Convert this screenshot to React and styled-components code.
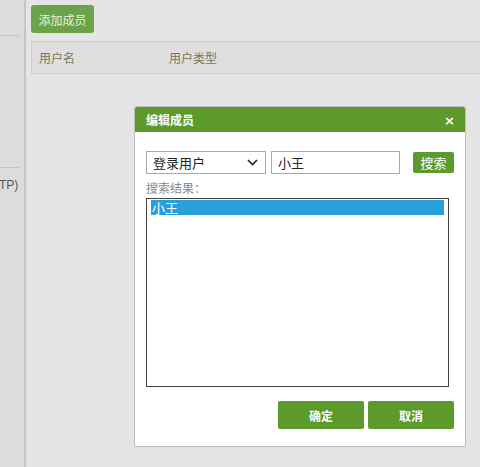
import React from "react";
import styled, { createGlobalStyle } from "styled-components";

const GlobalStyle = createGlobalStyle`
  html, body {
    margin: 0;
    padding: 0;
    background: #e5e5e5;
    font-family: "Noto Sans CJK SC", "Liberation Sans", sans-serif;
  }
`;

const Page = styled.div`
  position: relative;
  display: flex;
  width: 480px;
  height: 467px;
  overflow: hidden;
  background: #e5e5e5;
`;

const Sidebar = styled.div`
  width: 24px;
  flex-shrink: 0;
  background: #dcdcdc;
  border-right: 2px solid #c6c6c6;
  display: flex;
  flex-direction: column;
`;

const SideLine = styled.div`
  width: 19px;
  height: 1px;
  background: #c4c4c4;
  margin-top: ${(p) => p.top}px;
`;

const SideText = styled.div`
  font-family: "Liberation Sans", sans-serif;
  font-size: 12px;
  color: #555;
  margin-top: 10px;
  margin-left: -1px;
  line-height: 14px;
`;

const Main = styled.div`
  flex: 1;
  padding: 5px 0 0 5px;
  display: flex;
  flex-direction: column;
  gap: 8px;
`;

const AddButton = styled.button`
  width: 63px;
  height: 28px;
  padding: 0;
  border: none;
  border-radius: 3px;
  background: #6ba34a;
  color: #e6efdf;
  font-family: inherit;
  font-size: 12px;
`;

const TableHead = styled.div`
  height: 31px;
  display: flex;
  align-items: center;
  background: #dedede;
  border: 1px solid #cfcfcf;
  border-right: none;
  font-size: 12px;
  color: #76765c;
`;

const HeadCell = styled.div`
  width: ${(p) => p.w}px;
  padding-left: 7px;
`;

const Dialog = styled.div`
  position: absolute;
  left: 134px;
  top: 106px;
  width: 330px;
  height: 339px;
  background: #fff;
  border: 1px solid #bdbdbd;
  border-radius: 3px 3px 0 0;
  display: flex;
  flex-direction: column;
`;

const DialogHeader = styled.div`
  height: 26px;
  background: #5c9a2b;
  display: flex;
  align-items: center;
  justify-content: space-between;
  padding: 0 10px 0 11px;
  border-radius: 2px 2px 0 0;
  color: #fff;
  font-size: 12px;
  font-weight: bold;
`;

const Close = styled.span`
  font-family: "DejaVu Sans", sans-serif;
  font-size: 13px;
  font-weight: bold;
  margin-top: 1px;
`;

const DialogBody = styled.div`
  flex: 1;
  padding: 19px 11px 17px 11px;
  display: flex;
  flex-direction: column;
`;

const SearchRow = styled.div`
  display: flex;
  align-items: center;
`;

const SelectBox = styled.div`
  width: 120px;
  height: 23px;
  box-sizing: border-box;
  border: 1px solid #a9a9a9;
  display: flex;
  align-items: center;
  justify-content: space-between;
  padding: 0 7px 0 6px;
  font-size: 13px;
  color: #222;
`;

const InputBox = styled.div`
  width: 129px;
  height: 23px;
  box-sizing: border-box;
  margin-left: 5px;
  border: 1px solid #a9a9a9;
  padding: 0 6px;
  display: flex;
  align-items: center;
  font-size: 13px;
  color: #222;
`;

const SearchButton = styled.button`
  width: 41px;
  height: 21px;
  margin-left: 13px;
  padding: 0;
  border: none;
  border-radius: 2px;
  background: #5c9a2b;
  color: #fff;
  font-family: inherit;
  font-size: 13px;
`;

const Label = styled.div`
  margin-top: 5px;
  font-size: 12px;
  color: #8a8a8a;
  line-height: 17px;
`;

const ListBox = styled.div`
  margin-top: 2px;
  width: 303px;
  height: 189px;
  box-sizing: border-box;
  border: 1px solid #444;
  padding: 1px 4px 0 4px;
`;

const Option = styled.div`
  height: 15px;
  line-height: 15px;
  padding-left: 1px;
  font-size: 13px;
  background: ${(p) => (p.selected ? "#29a0da" : "transparent")};
  color: ${(p) => (p.selected ? "#fff" : "#222")};
`;

const Footer = styled.div`
  margin-top: 14px;
  display: flex;
  justify-content: flex-end;
  gap: 4px;
`;

const FooterButton = styled.button`
  width: 86px;
  height: 28px;
  padding: 0;
  border: none;
  border-radius: 2px;
  background: #5c9a2b;
  color: #fff;
  font-family: inherit;
  font-size: 12px;
  font-weight: bold;
`;

function Chevron() {
  return (
    <svg width="11" height="7" viewBox="0 0 11 7">
      <path d="M1 1l4.5 4.5L10 1" fill="none" stroke="#222" strokeWidth="1.6" />
    </svg>
  );
}

export default function App() {
  return (
    <Page>
      <GlobalStyle />
      <Sidebar>
        <SideLine top={35} />
        <SideLine top={131} />
        <SideText>TP)</SideText>
      </Sidebar>
      <Main>
        <AddButton>添加成员</AddButton>
        <TableHead>
          <HeadCell w={123}>用户名</HeadCell>
          <HeadCell w={120}>用户类型</HeadCell>
        </TableHead>
      </Main>

      <Dialog>
        <DialogHeader>
          <span>编辑成员</span>
          <Close>×</Close>
        </DialogHeader>
        <DialogBody>
          <SearchRow>
            <SelectBox>
              <span>登录用户</span>
              <Chevron />
            </SelectBox>
            <InputBox>小王</InputBox>
            <SearchButton>搜索</SearchButton>
          </SearchRow>
          <Label>搜索结果：</Label>
          <ListBox>
            <Option selected>小王</Option>
          </ListBox>
          <Footer>
            <FooterButton>确定</FooterButton>
            <FooterButton>取消</FooterButton>
          </Footer>
        </DialogBody>
      </Dialog>
    </Page>
  );
}
